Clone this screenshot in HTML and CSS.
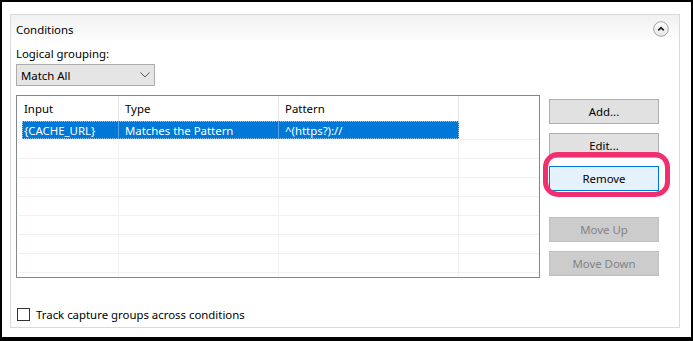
FILE: index.html
```html
<!DOCTYPE html>
<html lang="en">
<head>
  <meta charset="UTF-8">
  <title>Conditions</title>
  <link rel="stylesheet" href="styles.css">
</head>
<body>

  <div class="panel">
    <div class="panel-head">
      <span>Conditions</span>
      <svg class="collapse" width="16" height="16" viewBox="0 0 16 16">
        <defs>
          <linearGradient id="cg" x1="0" y1="0" x2="0" y2="1">
            <stop offset="0" stop-color="#ffffff"/>
            <stop offset="1" stop-color="#e4e4e4"/>
          </linearGradient>
        </defs>
        <circle cx="8" cy="8" r="7.3" fill="url(#cg)" stroke="#a3a3a3" stroke-width="1"/>
        <path d="M5.2 9.4 L8 6.6 L10.8 9.4" fill="none" stroke="#1e1e1e" stroke-width="1.7"/>
      </svg>
    </div>

    <div class="panel-body">
      <div class="label">Logical grouping:</div>
      <div class="select">
        <span>Match All</span>
        <svg width="10" height="6" viewBox="0 0 10 6">
          <path d="M0.5 0.5 L5 5 L9.5 0.5" fill="none" stroke="#555" stroke-width="1"/>
        </svg>
      </div>

      <div class="list-area">
        <div class="list">
          <div class="row head">
            <div class="cell">Input</div>
            <div class="cell">Type</div>
            <div class="cell">Pattern</div>
            <div class="cell"></div>
          </div>
          <div class="row">
            <div class="sel">
              <div class="cell">{CACHE_URL}</div>
              <div class="cell">Matches the Pattern</div>
              <div class="cell">^(https?)://</div>
            </div>
            <div class="cell"></div>
          </div>
          <div class="row"><div class="cell"></div><div class="cell"></div><div class="cell"></div><div class="cell"></div></div>
          <div class="row"><div class="cell"></div><div class="cell"></div><div class="cell"></div><div class="cell"></div></div>
          <div class="row"><div class="cell"></div><div class="cell"></div><div class="cell"></div><div class="cell"></div></div>
          <div class="row"><div class="cell"></div><div class="cell"></div><div class="cell"></div><div class="cell"></div></div>
          <div class="row"><div class="cell"></div><div class="cell"></div><div class="cell"></div><div class="cell"></div></div>
          <div class="row"><div class="cell"></div><div class="cell"></div><div class="cell"></div><div class="cell"></div></div>
          <div class="row"><div class="cell"></div><div class="cell"></div><div class="cell"></div><div class="cell"></div></div>
          <div class="row"><div class="cell"></div><div class="cell"></div><div class="cell"></div><div class="cell"></div></div>
        </div>

        <div class="actions">
          <button class="btn">Add...</button>
          <button class="btn">Edit...</button>
          <div class="marked">
            <button class="btn focus">Remove</button>
            <span class="ring"></span>
          </div>
          <button class="btn off up">Move Up</button>
          <button class="btn off">Move Down</button>
        </div>
      </div>

      <label class="check">
        <span class="box"></span>
        Track capture groups across conditions
      </label>
    </div>
  </div>

</body>
</html>
```

FILE: styles.css
```css
body {
  margin: 0;
  width: 693px;
  height: 341px;
  box-sizing: border-box;
  border: 2px solid #000;
  border-bottom-width: 4px;
  padding: 12px 11px 9px 8px;
  background: #fff;
  font-family: "Noto Sans", sans-serif;
  font-size: 11.4px;
  color: #000;
}

.panel {
  height: 100%;
  box-sizing: border-box;
  border: 1px solid #dadada;
  display: flex;
  flex-direction: column;
}

.panel-head {
  height: 28px;
  display: flex;
  align-items: center;
  justify-content: space-between;
  padding: 0 10px 0 5px;
  background: linear-gradient(#f1f1f1, #fff);
}

.panel-body {
  padding: 3px 0 0 5px;
}

.label {
  line-height: 16px;
}

.select {
  margin-top: 2px;
  width: 139px;
  height: 22px;
  box-sizing: border-box;
  border: 1px solid #acacac;
  background: #e5e5e5;
  display: flex;
  align-items: center;
  justify-content: space-between;
  padding: 0 4px 0 4px;
}

.list-area {
  margin-top: 9px;
  height: 183px;
  display: flex;
  align-items: flex-start;
  gap: 9px;
}

.list {
  width: 524px;
  height: 183px;
  box-sizing: border-box;
  border: 1px solid #828790;
  padding-left: 1px;
  overflow: hidden;
}

.row {
  display: grid;
  grid-template-columns: 101px 160px 180px 1fr;
  height: 19px;
  box-sizing: border-box;
  border-bottom: 1px solid #f0f0f0;
}

.row.head {
  height: 25px;
  border-bottom: none;
}

.cell {
  border-right: 1px solid #f0f0f0;
  padding-left: 6px;
  display: flex;
  align-items: center;
  white-space: nowrap;
}

.row .cell:last-child {
  border-right: none;
}

.head .cell {
  border-right-color: #e5e5e5;
}

.sel {
  grid-column: 1 / 4;
  margin-left: 4px;
  display: grid;
  grid-template-columns: 97px 160px 180px;
  background: #0078d7;
  color: #fff;
  outline: 1px dotted #9cc9ef;
  outline-offset: -1px;
}

.sel .cell {
  border-right-color: #5aa3e0;
}

.sel .cell:first-child {
  padding-left: 2px;
}

.sel .cell:last-child {
  border-right: none;
}

.actions {
  width: 110px;
  padding-top: 4px;
  display: flex;
  flex-direction: column;
}

.btn {
  width: 110px;
  height: 25px;
  margin: 0 0 9px;
  padding: 0;
  border: 1px solid #adadad;
  background: #e1e1e1;
  font-family: inherit;
  font-size: 11.4px;
  color: #000;
}

.btn:last-child {
  margin-bottom: 0;
}

.marked {
  position: relative;
  margin-top: -1px;
  height: 25px;
}

.btn.focus {
  border-color: #0078d7;
  background: #e5f1fb;
}

.ring {
  position: absolute;
  left: -6px;
  top: -14px;
  width: 127px;
  height: 45px;
  box-sizing: border-box;
  border: 5px solid #ef2f6e;
  border-radius: 15px;
}

.btn.off {
  background: #cccccc;
  border-color: #bfbfbf;
  color: #838383;
}

.btn.up {
  margin-top: 26px;
}

.check {
  margin-top: 30px;
  display: flex;
  align-items: center;
  gap: 6px;
  height: 13px;
  padding-left: 1px;
}

.box {
  width: 13px;
  height: 13px;
  box-sizing: border-box;
  border: 1px solid #333;
  background: #fff;
}
```
